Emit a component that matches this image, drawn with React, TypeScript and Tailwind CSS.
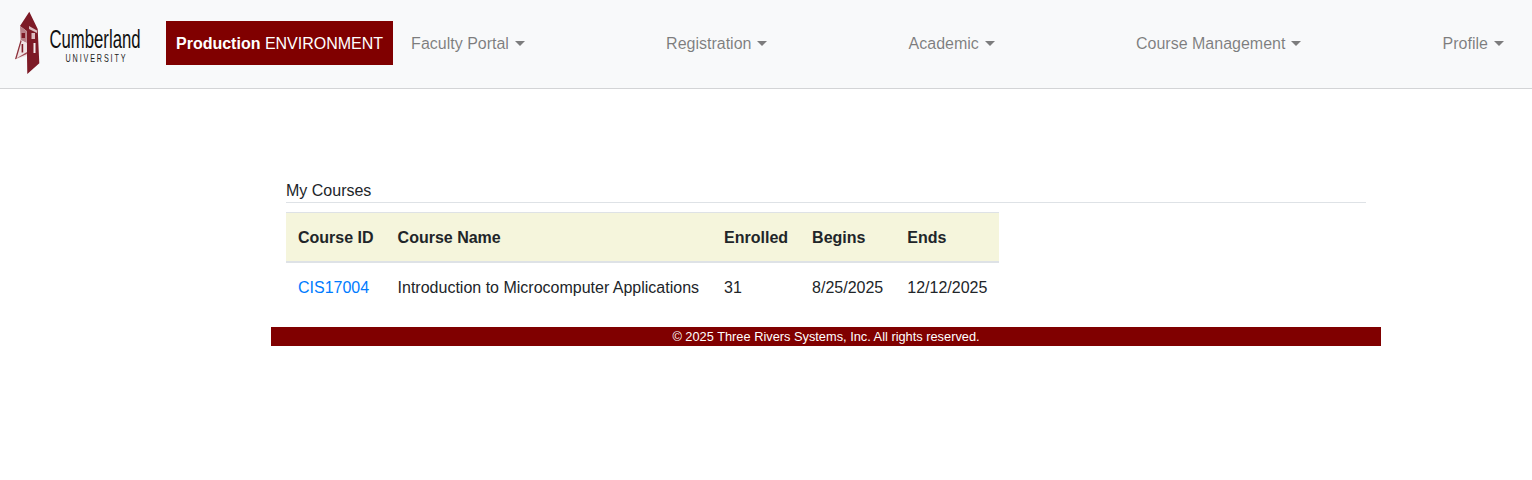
import React from "react";

function Logo() {
  return (
    <svg width="130" height="66" viewBox="0 0 130 66" className="block">
      <g transform="translate(-13 -11)">
        <path d="M29.3 11.7 L37.7 29 L39.3 63.3 L27.3 74 L26.6 31 L20 26 Z" fill="#7d1a26" />
        <path d="M20 26 L26.6 31 L26.7 43 L20.6 40 Z" fill="#b98088" />
        <path d="M20.6 40 L26.7 43 L26.9 56 L15 59.3 Z" fill="#f0e4e5" />
        <path d="M20.6 40 L21.6 41 L16.5 58.8 L15 59.3 Z" fill="#8d303a" />
        <path d="M15 59.3 L26.9 52 L26.9 54 Z" fill="#a04a54" />
        <rect x="21.6" y="33" width="3.4" height="5" fill="#7d1a26" />
        <rect x="21.6" y="44" width="1.6" height="8.5" fill="#7d1a26" />
        <path d="M29 26 L37 30.5 L37 33 L29 29 Z" fill="#dcbcc0" />
        <rect x="31.5" y="33" width="3.5" height="6" fill="#dcbcc0" />
        <rect x="33.5" y="43" width="2" height="10" fill="#f6ecec" />
      </g>
      <text transform="translate(36.5 37) scale(0.643 1)" fontFamily="'Liberation Sans', sans-serif" fontSize="26" fill="#111">Cumberland</text>
      <text transform="translate(52.5 50.5) scale(0.72 1)" fontFamily="'Liberation Sans', sans-serif" fontSize="10" letterSpacing="2.6" fill="#222">UNIVERSITY</text>
    </svg>
  );
}

function NavLink({ label }: { label: string }) {
  return (
    <a href="#" className="flex items-center px-2 py-2 text-base leading-6 text-[rgba(0,0,0,0.5)] no-underline">
      {label}
      <span className="ml-[6px] mt-[-2px] inline-block h-0 w-0 border-x-[5px] border-t-[5px] border-x-transparent border-t-[rgba(0,0,0,0.5)]" />
    </a>
  );
}

export default function App() {
  const cell = "px-3 pt-[13px] pb-[11px] text-left align-top";
  const head = `${cell} border-t border-b-2 border-[#dee2e6] font-bold`;
  return (
    <div className="min-h-[480px] bg-white font-['Liberation_Sans',Arial,sans-serif] text-base leading-6 text-[#212529]">
      <nav className="flex h-[89px] items-center border-b border-[#d3d4d6] bg-[#f8f9fa] pl-[13px] pr-[20px]">
        <Logo />
        <div className="ml-[23px] -mt-[2px] flex h-[44px] items-center bg-[#800000] px-[10px] pt-[2px] text-white">
          <span>
            <strong className="font-bold">Production</strong> ENVIRONMENT
          </span>
        </div>
        <div className="ml-[10px] flex flex-1 items-center justify-between">
          <NavLink label="Faculty Portal" />
          <NavLink label="Registration" />
          <NavLink label="Academic" />
          <NavLink label="Course Management" />
          <NavLink label="Profile" />
        </div>
      </nav>
      <main className="ml-[271px] w-[1110px] pt-[89px]">
        <div className="px-[15px]">
          <div className="h-[25px] border-b border-[#dee2e6] pt-px">My Courses</div>
          <table className="mt-[9px] border-collapse">
            <thead>
              <tr className="bg-[#f5f5dc]">
                <th className={head}>Course ID</th>
                <th className={`${head} pr-[13px]`}>Course Name</th>
                <th className={head}>Enrolled</th>
                <th className={head}>Begins</th>
                <th className={head}>Ends</th>
              </tr>
            </thead>
            <tbody>
              <tr>
                <td className={cell}><a href="#" className="text-[#007bff] no-underline">CIS17004</a></td>
                <td className={`${cell} pr-[13px]`}>Introduction to Microcomputer Applications</td>
                <td className={cell}>31</td>
                <td className={cell}>8/25/2025</td>
                <td className={cell}>12/12/2025</td>
              </tr>
            </tbody>
          </table>
        </div>
        <footer className="mt-[16px] h-[19px] bg-[#800000] text-center text-[12.8px] leading-[19px] text-white">
          © 2025 Three Rivers Systems, Inc. All rights reserved.
        </footer>
      </main>
    </div>
  );
}
